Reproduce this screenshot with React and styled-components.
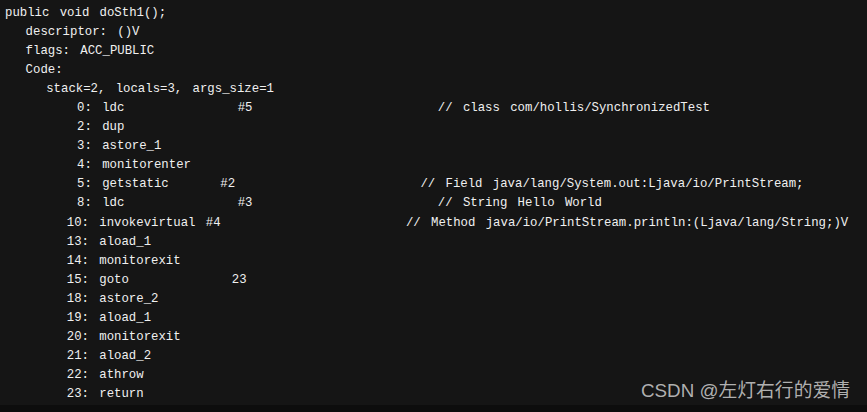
import React from 'react';
import styled, { createGlobalStyle } from 'styled-components';

const GlobalStyle = createGlobalStyle`
  html, body {
    margin: 0;
    padding: 0;
    background: #0d0d0d;
  }
  #root {
    width: 867px;
    height: 412px;
    overflow: hidden;
  }
`;

const Page = styled.div`
  position: relative;
  width: 867px;
  height: 412px;
  display: flex;
  flex-direction: column;
  background: #0d0d0d;
`;

const Console = styled.div`
  height: 405px;
  background: #151515;
  padding: 4px 0 0 5px;
  box-sizing: border-box;
  overflow: hidden;
`;

const Line = styled.pre`
  margin: 0;
  height: 19.05px;
  line-height: 19px;
  font-family: 'Liberation Mono', 'DejaVu Sans Mono', monospace;
  font-size: 12.33px;
  word-spacing: 2.9px;
  color: #f0f0f0;
  white-space: pre;
`;

const Watermark = styled.div`
  position: absolute;
  right: 17px;
  bottom: 9px;
  font-family: 'Liberation Sans', 'Noto Sans CJK SC', sans-serif;
  font-size: 18.8px;
  line-height: 24px;
  color: rgba(205, 205, 205, 0.85);
`;

const lines = [
  'public void doSth1();',
  '  descriptor: ()V',
  '  flags: ACC_PUBLIC',
  '  Code:',
  '    stack=2, locals=3, args_size=1',
  '       0: ldc           #5                  // class com/hollis/SynchronizedTest',
  '       2: dup',
  '       3: astore_1',
  '       4: monitorenter',
  '       5: getstatic     #2                  // Field java/lang/System.out:Ljava/io/PrintStream;',
  '       8: ldc           #3                  // String Hello World',
  '      10: invokevirtual #4                  // Method java/io/PrintStream.println:(Ljava/lang/String;)V',
  '      13: aload_1',
  '      14: monitorexit',
  '      15: goto          23',
  '      18: astore_2',
  '      19: aload_1',
  '      20: monitorexit',
  '      21: aload_2',
  '      22: athrow',
  '      23: return',
];

export default function App() {
  return (
    <Page>
      <GlobalStyle />
      <Console>
        {lines.map((text, i) => (
          <Line key={i}>{text}</Line>
        ))}
      </Console>
      <Watermark>CSDN @左灯右行的爱情</Watermark>
    </Page>
  );
}
